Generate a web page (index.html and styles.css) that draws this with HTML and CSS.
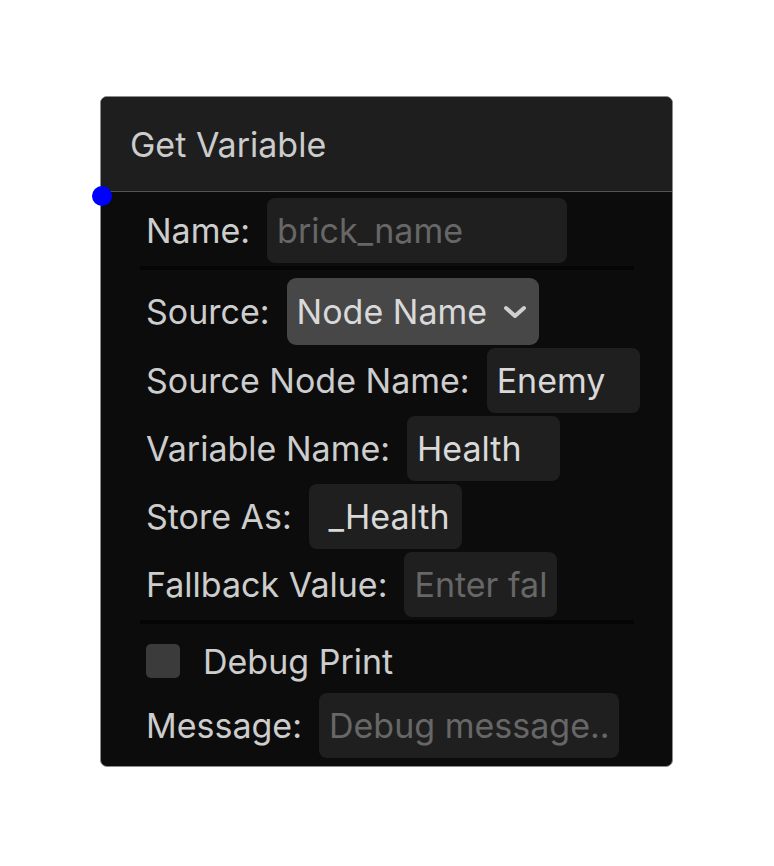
FILE: index.html
```html
<!DOCTYPE html>
<html>
<head>
    <title>Get Variable</title>
    <link rel="stylesheet" href="styles.css">
</head>
<body>
<div class="canvas">
    <!-- Get Variable brick -->
    <div class="node">
        <span class="port port-in"></span>
        <div class="node-header">Get Variable</div>
        <div class="node-body">
            <div class="row">
                <label for="brick-name">Name:</label>
                <input class="field field-wide" id="brick-name" type="text" placeholder="brick_name">
            </div>
            <div class="divider"></div>
            <div class="row row-select">
                <label for="source">Source:</label>
                <span class="select-wrap">
                    <select id="source" class="select">
                        <option>Node Name</option>
                        <option>Self</option>
                        <option>Parent</option>
                    </select>
                    <svg class="chevron" width="24" height="16" viewBox="0 0 24 16">
                        <polyline points="3,4 12,12 21,4" fill="none" stroke="#cfcfcf" stroke-width="4" stroke-linecap="round" stroke-linejoin="round"/>
                    </svg>
                </span>
            </div>
            <div class="row">
                <label for="source-node">Source Node Name:</label>
                <input class="field" id="source-node" type="text" value="Enemy">
            </div>
            <div class="row">
                <label for="var-name">Variable Name:</label>
                <input class="field" id="var-name" type="text" value="Health">
            </div>
            <div class="row">
                <label for="store-as">Store As:</label>
                <input class="field" id="store-as" type="text" value=" _Health">
            </div>
            <div class="row">
                <label for="fallback">Fallback Value:</label>
                <input class="field" id="fallback" type="text" placeholder="Enter fallback value">
            </div>
            <div class="divider divider-low"></div>
            <div class="row row-check">
                <input class="check" id="debug-print" type="checkbox">
                <label for="debug-print">Debug Print</label>
            </div>
            <div class="row">
                <label for="message">Message:</label>
                <input class="field field-wide" id="message" type="text" placeholder="Debug message..">
            </div>
        </div>
    </div>
</div>
</body>
</html>
```

FILE: styles.css
```css
body {
    margin: 0;
    background: #ffffff;
    font-family: Inter, "Noto Sans", sans-serif;
}

.canvas {
    padding: 96px 0 0 100px;
}

.node {
    position: relative;
    width: 571px;
    background: #0c0c0c;
    border: 1px solid #8c8c8c;
    border-radius: 7px;
}

/* input socket on the left edge */
.port {
    position: absolute;
    width: 20px;
    height: 20px;
    border-radius: 50%;
    background: #0000ff;
}

.port-in {
    left: -9px;
    top: 89px;
}

.node-header {
    height: 94px;
    padding-left: 29px;
    display: flex;
    align-items: center;
    background: #1e1e1e;
    border-bottom: 1px solid #555555;
    border-radius: 6px 6px 0 0;
    color: #cccccc;
    font-size: 34px;
}

.node-body {
    padding: 6px 38px 5px 39px;
}

.row {
    display: flex;
    align-items: center;
    gap: 17px;
    height: 65px;
    margin-bottom: 3px;
    padding-left: 6px;
    color: #cdcdcd;
    font-size: 34px;
    white-space: nowrap;
}

.row-select {
    height: 67px;
}

.row-check {
    height: 64px;
    gap: 23px;
    margin-bottom: 0;
}

.divider {
    height: 4px;
    margin: 2px 0 8px;
    background: #050505;
}

.divider-low {
    margin: 2px 0 5px;
}

.field {
    box-sizing: border-box;
    width: 153px;
    height: 65px;
    padding: 0 10px;
    border: none;
    border-radius: 8px;
    background: #1f1f1f;
    color: #d9d9d9;
    font: inherit;
    outline: none;
}

.field::placeholder {
    color: #676767;
}

.field-wide {
    width: 300px;
}

.select-wrap {
    position: relative;
    display: flex;
}

.select {
    -webkit-appearance: none;
    appearance: none;
    box-sizing: border-box;
    width: 252px;
    height: 67px;
    padding: 0 40px 0 10px;
    border: none;
    border-radius: 9px;
    background: #474747;
    color: #d9d9d9;
    font: inherit;
    outline: none;
}

.chevron {
    position: absolute;
    right: 12px;
    top: 26px;
    pointer-events: none;
}

.check {
    -webkit-appearance: none;
    appearance: none;
    flex: none;
    width: 34px;
    height: 34px;
    margin: 0;
    border-radius: 5px;
    background: #3b3b3b;
}
```
